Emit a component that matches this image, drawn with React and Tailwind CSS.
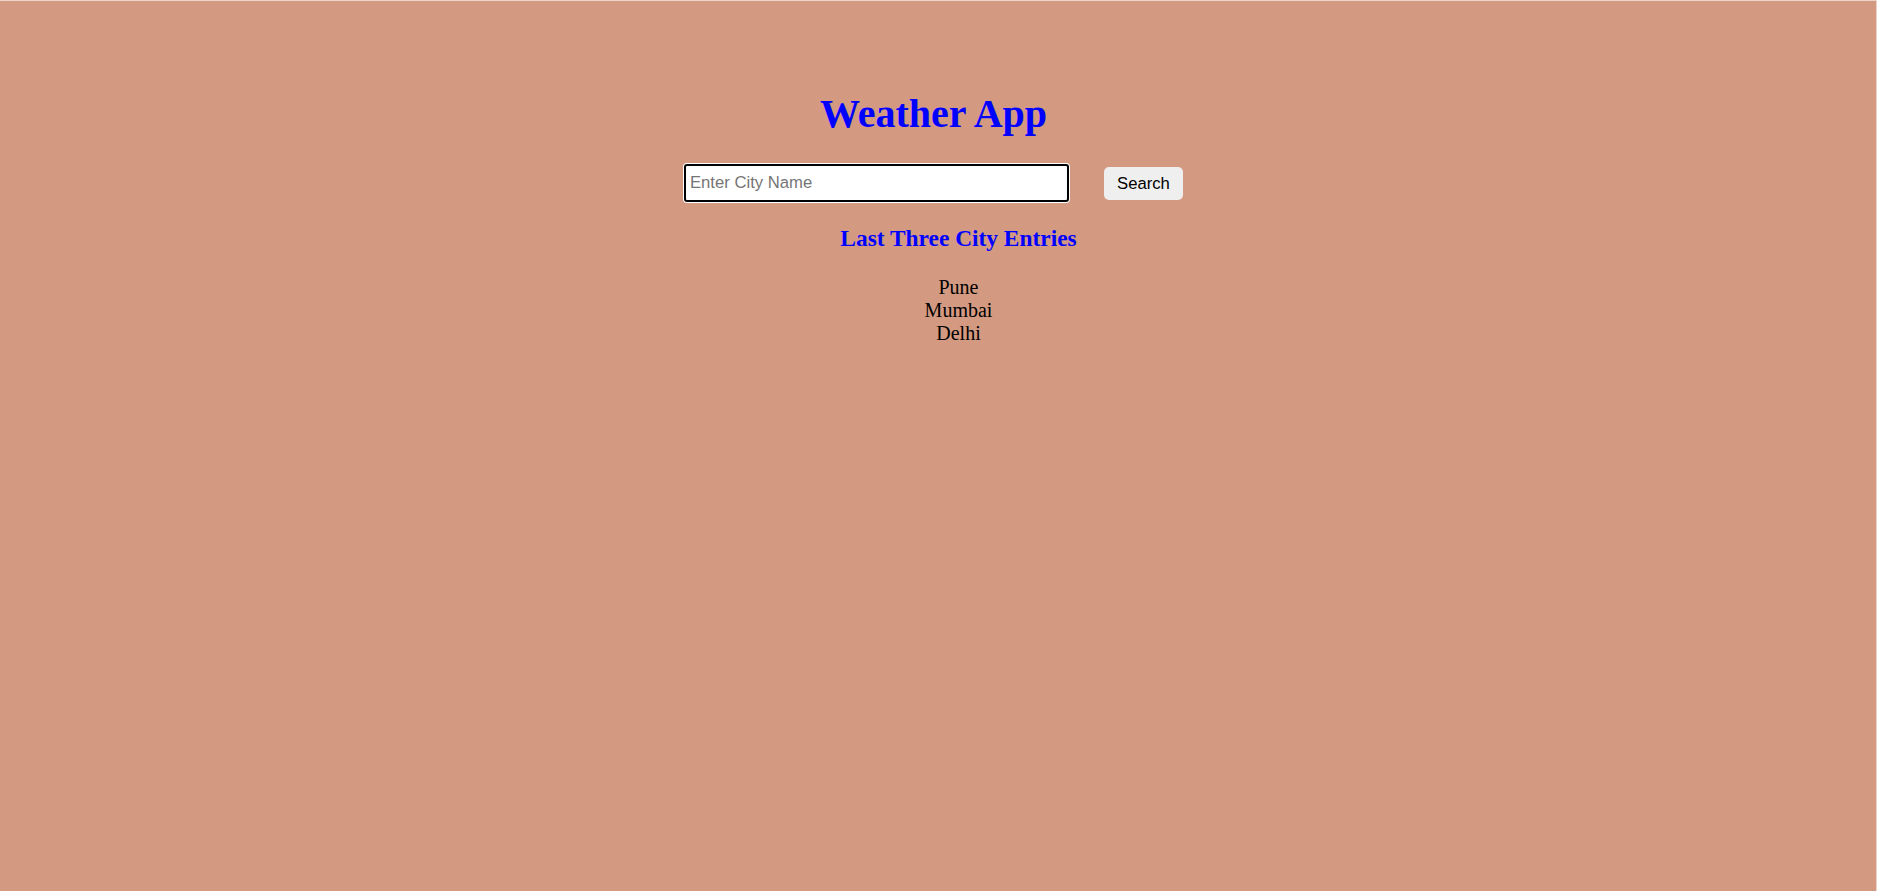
export default function App() {
  const cities = ["Pune", "Mumbai", "Delhi"];
  return (
    <div className="min-h-screen w-full bg-[#d49a81] border-t border-r border-[#ecd3c8] flex flex-col items-center pr-[9px]">
      <h1 className="mt-[91px] text-[40px] leading-[44px] font-bold text-[#0000ff] [font-family:'Liberation_Serif',serif]">
        Weather App
      </h1>
      <div className="mt-[28px] flex items-center gap-[35px]">
        <input
          type="text"
          placeholder="Enter City Name"
          className="w-[385px] h-[38px] border-2 border-black rounded-[3px] bg-white px-[4px] text-[16.67px] text-black placeholder:text-[#757575] shadow-[0_0_0_1px_#ffffff] outline-none [font-family:'Liberation_Sans',Arial,sans-serif]"
        />
        <button className="w-[79px] h-[33px] rounded-[5px] bg-[#efefef] text-[16.67px] leading-[31px] text-black [font-family:'Liberation_Sans',Arial,sans-serif]">
          Search
        </button>
      </div>
      <div className="pl-[50px] flex flex-col items-center text-center [font-family:'Liberation_Serif',serif]">
        <h3 className="mt-[23px] text-[23.4px] leading-[27px] font-bold text-[#0000ff]">
          Last Three City Entries
        </h3>
        <ul className="mt-[24px] text-[20px] leading-[23px] text-black">
          {cities.map((c) => (
            <li key={c}>{c}</li>
          ))}
        </ul>
      </div>
    </div>
  );
}
